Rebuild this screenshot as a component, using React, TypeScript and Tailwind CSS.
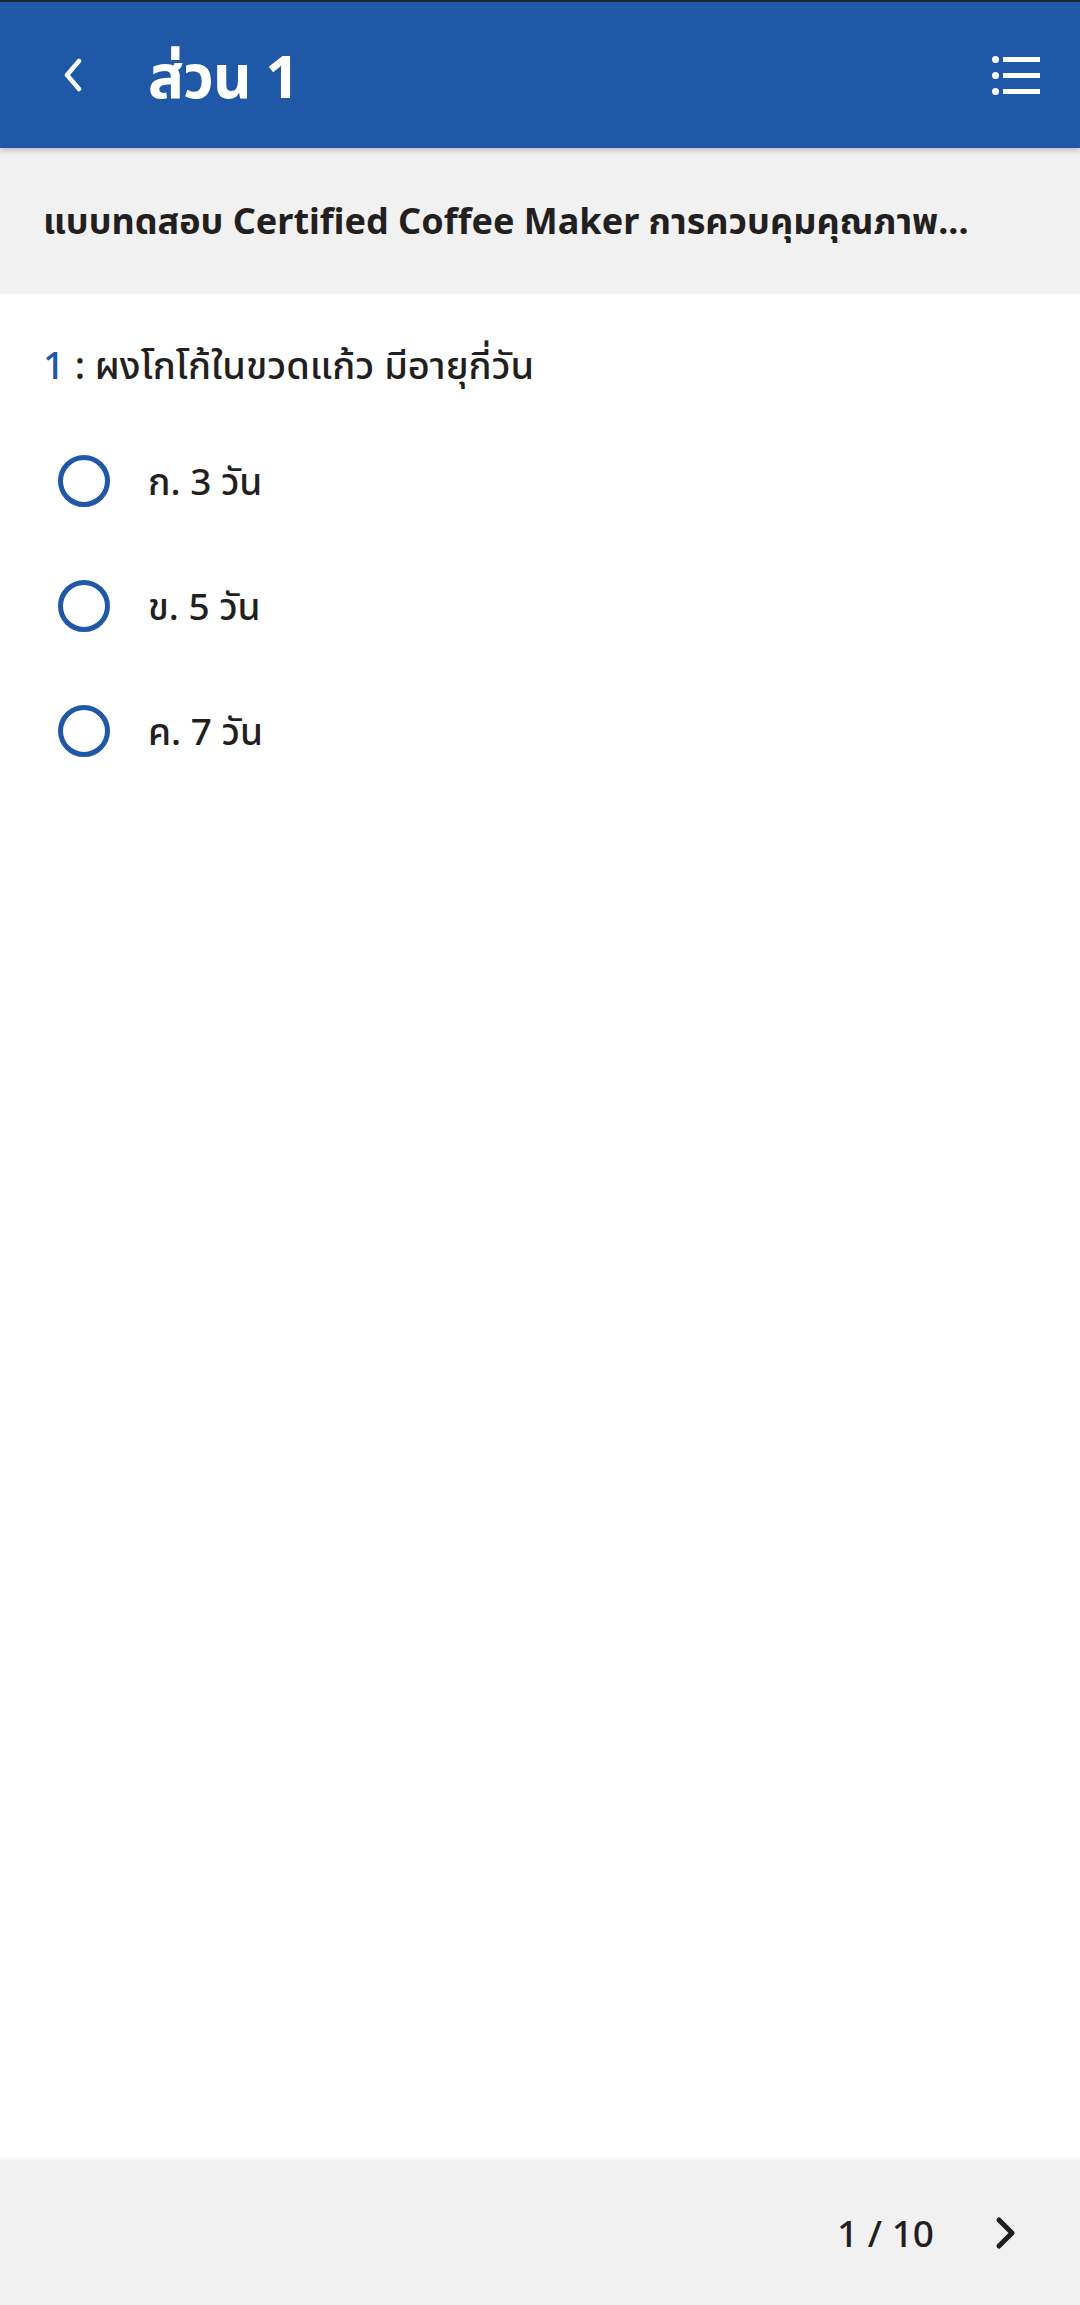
import React from "react";

const font = { fontFamily: '"Noto Sans", "Noto Sans Thai", "Liberation Sans", sans-serif' };

function Option({ label }: { label: string }) {
  return (
    <div className="flex h-[125px] items-center">
      <div className="ml-[58px] h-[52px] w-[52px] rounded-full border-[5px] border-[#1f58a6]" />
      <div className="ml-[38px] text-[37px] font-medium text-[#231f20]">{label}</div>
    </div>
  );
}

export default function App() {
  return (
    <div className="flex h-[2305px] w-[1080px] flex-col bg-white" style={font}>
      <header className="relative z-10 flex h-[148px] shrink-0 items-center border-t-2 border-[#1a2535] bg-[#1f58a6] shadow-[0_2px_6px_rgba(0,0,0,0.25)]">
        <svg className="ml-[60px]" width="26" height="34" viewBox="0 0 26 34" fill="none">
          <path d="M19 3 L7 17 L19 31" stroke="white" strokeWidth="4.5" strokeLinecap="round" strokeLinejoin="round" />
        </svg>
        <h1 className="ml-[62px] text-[60px] font-bold leading-none tracking-[-1px] text-white">ส่วน 1</h1>
        <div className="ml-auto mr-[40px] flex flex-col gap-[9px]">
          {[0, 1, 2].map((i) => (
            <div key={i} className="flex items-center gap-[4px]">
              <div className="h-[7px] w-[7px] rounded-full bg-white" />
              <div className="h-[5px] w-[37px] bg-white" />
            </div>
          ))}
        </div>
      </header>
      <div className="flex h-[146px] shrink-0 items-center bg-[#f1f1f1] pl-[43px]">
        <p className="text-[36px] font-bold text-[#231f20]">แบบทดสอบ Certified Coffee Maker การควบคุมคุณภาพ...</p>
      </div>
      <main className="flex-1 pt-[46px]">
        <p className="pl-[43px] text-[38px] font-medium leading-[48px] text-[#231f20]">
          <span className="text-[#1f58a6]">1</span> : ผงโกโก้ในขวดแก้ว มีอายุกี่วัน
        </p>
        <div className="mt-[30px] flex flex-col">
          <Option label="ก. 3 วัน" />
          <Option label="ข. 5 วัน" />
          <Option label="ค. 7 วัน" />
        </div>
      </main>
      <footer className="flex h-[144px] shrink-0 items-center justify-end bg-[#f1f1f1] pr-[62px] shadow-[0_-2px_4px_rgba(0,0,0,0.08)]">
        <span className="text-[37px] font-medium text-[#231f20]">1 / 10</span>
        <svg className="ml-[60px]" width="24" height="36" viewBox="0 0 24 36" fill="none">
          <path d="M5 5 L18 18 L5 31" stroke="#231f20" strokeWidth="5" strokeLinecap="round" strokeLinejoin="round" />
        </svg>
      </footer>
    </div>
  );
}
